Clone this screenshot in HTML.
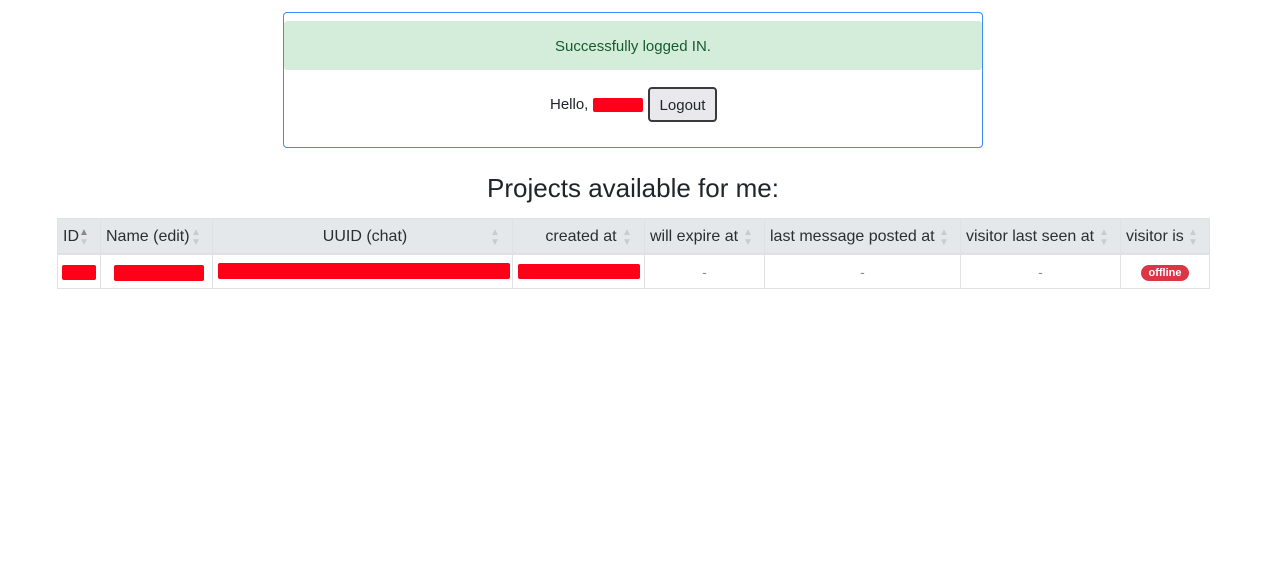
<!DOCTYPE html>
<html><head><meta charset="utf-8"><style>
*{margin:0;padding:0;box-sizing:border-box}
body{width:1280px;height:568px;background:#fff;font-family:"Liberation Sans",sans-serif;color:#212529;position:relative;overflow:hidden}
.a{position:absolute}
.card{left:283px;top:12px;width:700px;height:136px;border:1px solid #3d8bfd;border-radius:4px}
.alert{left:284px;top:21px;width:698px;height:49px;background:#d4eddb;border-radius:3px;color:#165a2c;font-size:15px;text-align:center;line-height:51px}
.btn{left:648px;top:87px;width:69px;height:35px;border:2px solid #3a3a3a;border-radius:4px;background:#e9e9ed;font-size:15px;line-height:33px;text-align:center}
h2{position:absolute;left:0;width:1266px;top:173px;text-align:center;font-weight:normal;font-size:26px;line-height:30px}
.th{position:absolute;top:218px;height:37px;background:#e5e8eb;border:1px solid #dee2e6;border-bottom:2px solid #dde1e4;font-weight:normal;font-size:16px;line-height:36px;color:#2a2e33;padding-left:5px;white-space:nowrap}
.td{position:absolute;top:254px;height:35px;border:1px solid #dee2e6;font-size:14px;line-height:34px;text-align:center;color:#888}
.ar{position:absolute;top:9px;width:10px;font-size:10px;line-height:10px;color:#c8ccd0}
.r{position:absolute;background:#ff0019;border-radius:2px}
</style></head><body>
<div class="a card"></div>
<div class="a alert">Successfully logged IN.</div>
<div class="a" style="left:550px;top:96px;font-size:15px">Hello,</div>
<div class="r" style="left:593px;top:98px;width:50px;height:14px"></div>
<div class="a btn">Logout</div>
<h2>Projects available for me:</h2>

<div class="th" style="left:57px;width:44px">ID<span class="ar" style="left:21px;color:#888">▲<br><span style="color:#c8ccd0">▼</span></span></div>
<div class="th" style="left:100px;width:113px">Name (edit)<span class="ar" style="left:90px">▲<br>▼</span></div>
<div class="th" style="left:212px;width:301px;text-align:center">UUID (chat)<span class="ar" style="left:277px">▲<br>▼</span></div>
<div class="th" style="left:512px;width:133px;text-align:center">created at<span class="ar" style="left:109px">▲<br>▼</span></div>
<div class="th" style="left:644px;width:121px">will expire at<span class="ar" style="left:98px">▲<br>▼</span></div>
<div class="th" style="left:764px;width:197px">last message posted at<span class="ar" style="left:174px">▲<br>▼</span></div>
<div class="th" style="left:960px;width:161px">visitor last seen at<span class="ar" style="left:138px">▲<br>▼</span></div>
<div class="th" style="left:1120px;width:90px">visitor is<span class="ar" style="left:67px">▲<br>▼</span></div>

<div class="td" style="left:57px;width:44px"></div>
<div class="td" style="left:100px;width:113px"></div>
<div class="td" style="left:212px;width:301px"></div>
<div class="td" style="left:512px;width:133px"></div>
<div class="td" style="left:644px;width:121px">-</div>
<div class="td" style="left:764px;width:197px">-</div>
<div class="td" style="left:960px;width:161px">-</div>
<div class="td" style="left:1120px;width:90px"></div>
<div class="r" style="left:62px;top:265px;width:34px;height:15px"></div>
<div class="r" style="left:114px;top:265px;width:90px;height:16px"></div>
<div class="r" style="left:218px;top:263px;width:292px;height:16px"></div>
<div class="r" style="left:518px;top:264px;width:122px;height:15px"></div>
<div class="a" style="left:1141px;top:265px;width:48px;height:16px;background:#dc3545;border-radius:8px;color:#fff;font-size:11px;font-weight:bold;line-height:16px;text-align:center">offline</div>
</body></html>
